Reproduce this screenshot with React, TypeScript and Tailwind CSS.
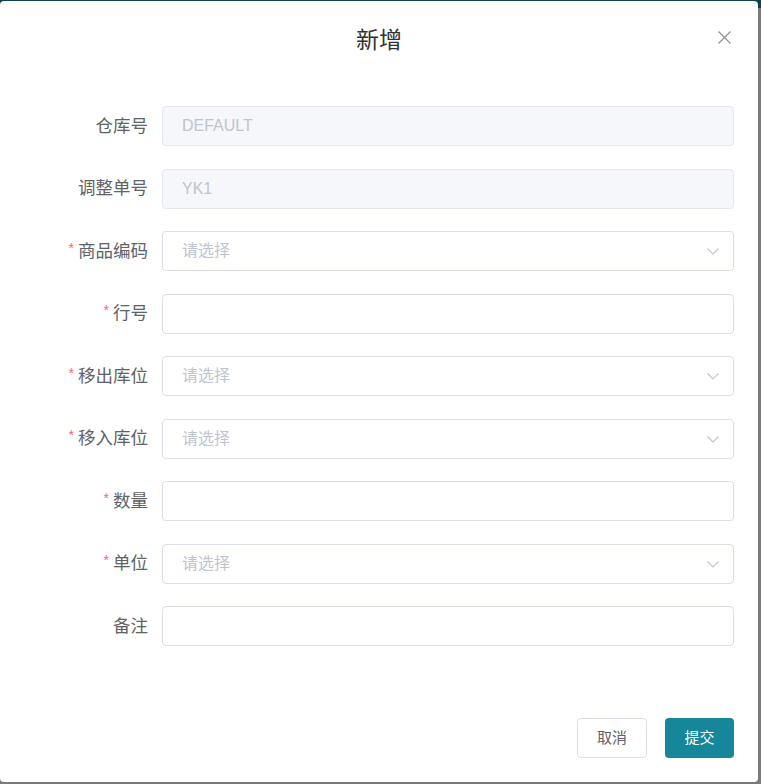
import React from "react";

const font = { fontFamily: '"Liberation Sans", "Noto Sans CJK SC", sans-serif' };

type Row = { label: string; required?: boolean; kind: "disabled" | "select" | "input"; value?: string };

const rows: Row[] = [
  { label: "仓库号", kind: "disabled", value: "DEFAULT" },
  { label: "调整单号", kind: "disabled", value: "YK1" },
  { label: "商品编码", required: true, kind: "select" },
  { label: "行号", required: true, kind: "input" },
  { label: "移出库位", required: true, kind: "select" },
  { label: "移入库位", required: true, kind: "select" },
  { label: "数量", required: true, kind: "input" },
  { label: "单位", required: true, kind: "select" },
  { label: "备注", kind: "input" },
];

function Chevron() {
  return (
    <svg width="14" height="14" viewBox="0 0 14 14" fill="none" className="text-[#c0c4cc]">
      <path d="M1.5 4.5 L7 10 L12.5 4.5" stroke="currentColor" strokeWidth="1.2" />
    </svg>
  );
}

export default function App() {
  return (
    <div className="relative w-[761px] h-[784px] bg-[#7a7a7a] overflow-hidden" style={font}>
      <div className="absolute left-0 top-0 w-full h-[8px] bg-[#0d4249]" />
      <div className="absolute left-0 top-[1px] w-[758px] h-[781px] bg-white rounded-[4px] flex flex-col">
        <div className="relative h-[80px] flex items-center justify-center">
          <span className="text-[23px] text-[#303133] leading-none mt-[-2px]">新增</span>
          <svg className="absolute left-[718px] top-[30px]" width="13" height="13" viewBox="0 0 13 13">
            <path d="M0.5 0.5 L12.5 12.5 M12.5 0.5 L0.5 12.5" stroke="#909399" strokeWidth="1.3" />
          </svg>
        </div>
        <div className="flex flex-col gap-[22.5px] pt-[25px] pl-[24px] pr-[24px]">
          {rows.map((r) => (
            <div key={r.label} className="flex items-center h-[40px]">
              <div className="w-[138px] pr-[14px] flex justify-end items-center text-[17.5px] text-[#606266]">
                {r.required && <span className="text-[#f56c6c] text-[14px] mr-[4px] mt-[-6px]">*</span>}
                <span>{r.label}</span>
              </div>
              {r.kind === "disabled" && (
                <div className="flex-1 h-[40px] rounded-[4px] border border-[#e4e7ed] bg-[#f5f7fa] flex items-center pl-[19px] text-[16px] text-[#c0c4cc]">
                  {r.value}
                </div>
              )}
              {r.kind === "select" && (
                <div className="flex-1 h-[40px] rounded-[4px] border border-[#dcdfe6] bg-white flex items-center justify-between pl-[19px] pr-[13px] text-[16px] text-[#c0c4cc]">
                  <span>请选择</span>
                  <Chevron />
                </div>
              )}
              {r.kind === "input" && (
                <div className="flex-1 h-[40px] rounded-[4px] border border-[#dcdfe6] bg-white" />
              )}
            </div>
          ))}
        </div>
        <div className="flex-1" />
        <div className="flex justify-end gap-[18px] pr-[24px] pb-[24px]">
          <button className="w-[70px] h-[40px] rounded-[4px] border border-[#dcdfe6] bg-white text-[15px] text-[#606266]">
            取消
          </button>
          <button className="w-[69px] h-[40px] rounded-[4px] bg-[#16879a] text-[15px] text-white">
            提交
          </button>
        </div>
      </div>
    </div>
  );
}
